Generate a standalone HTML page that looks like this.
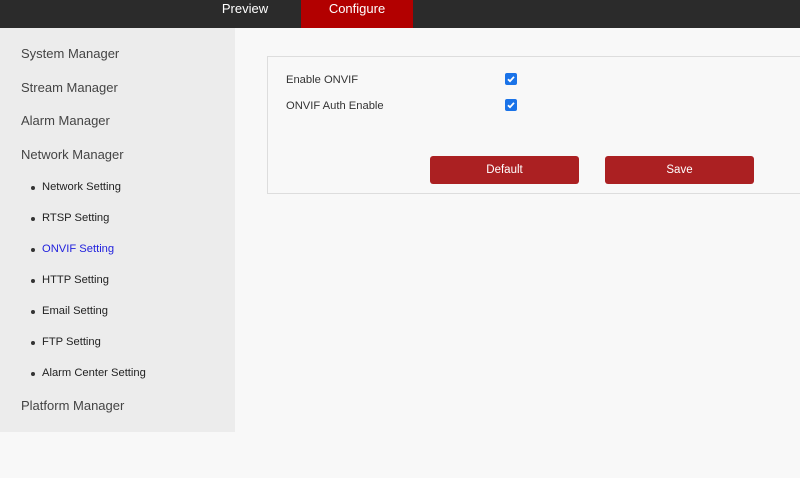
<!DOCTYPE html>
<html><head><style>
*{margin:0;padding:0;box-sizing:border-box}
body{width:800px;height:478px;background:#f8f8f8;font-family:"Liberation Sans",sans-serif;position:relative;overflow:hidden}
.top{position:absolute;left:0;top:0;width:800px;height:28px;background:#2b2b2b}
.tab{position:absolute;top:0;height:28px;line-height:18px;color:#fff;font-size:13px;text-align:center}
.side{position:absolute;left:0;top:28px;width:235px;height:404px;background:#ececec}
.m{position:absolute;left:21px;font-size:13px;color:#444;line-height:16px;margin-top:1px}
.s{position:absolute;left:42px;font-size:11.2px;color:#222;line-height:14px;margin-top:1px}
.s:before{content:"";position:absolute;left:-11px;top:6px;width:4px;height:4px;border-radius:2px;background:#333}
.box{position:absolute;left:267px;top:56px;width:560px;height:138px;border:1px solid #ddd;background:#f8f8f8}
.lbl{position:absolute;left:286px;font-size:11.2px;color:#333;line-height:14px;margin-top:1px}
.cb{position:absolute;left:505px;width:12px;height:12px;background:#1a73e8;border-radius:2px}
.btn{position:absolute;top:156px;width:149px;height:28px;background:#ab2022;border-radius:3px;color:#fff;font-size:11.5px;text-align:center;line-height:29px}
</style></head><body>
<div class="top"></div>
<div class="tab" style="left:210px;width:70px">Preview</div>
<div class="tab" style="left:301px;width:112px;background:#b20000">Configure</div>
<div class="side"></div>
<div class="m" style="top:45px">System Manager</div>
<div class="m" style="top:79px">Stream Manager</div>
<div class="m" style="top:112px">Alarm Manager</div>
<div class="m" style="top:146px">Network Manager</div>
<div class="s" style="top:179px">Network Setting</div>
<div class="s" style="top:210px">RTSP Setting</div>
<div class="s" style="top:241px;color:#2222dd">ONVIF Setting</div>
<div class="s" style="top:272px">HTTP Setting</div>
<div class="s" style="top:303px">Email Setting</div>
<div class="s" style="top:334px">FTP Setting</div>
<div class="s" style="top:365px">Alarm Center Setting</div>
<div class="m" style="top:397px">Platform Manager</div>
<div class="box"></div>
<div class="lbl" style="top:72px">Enable ONVIF</div>
<div class="lbl" style="top:98px">ONVIF Auth Enable</div>
<svg class="cb" style="top:73px" viewBox="0 0 12 12"><path d="M3 6.2l2 2 4-4.4" stroke="#fff" stroke-width="1.8" fill="none"/></svg>
<svg class="cb" style="top:99px" viewBox="0 0 12 12"><path d="M3 6.2l2 2 4-4.4" stroke="#fff" stroke-width="1.8" fill="none"/></svg>
<div class="btn" style="left:430px">Default</div>
<div class="btn" style="left:605px">Save</div>
</body></html>
